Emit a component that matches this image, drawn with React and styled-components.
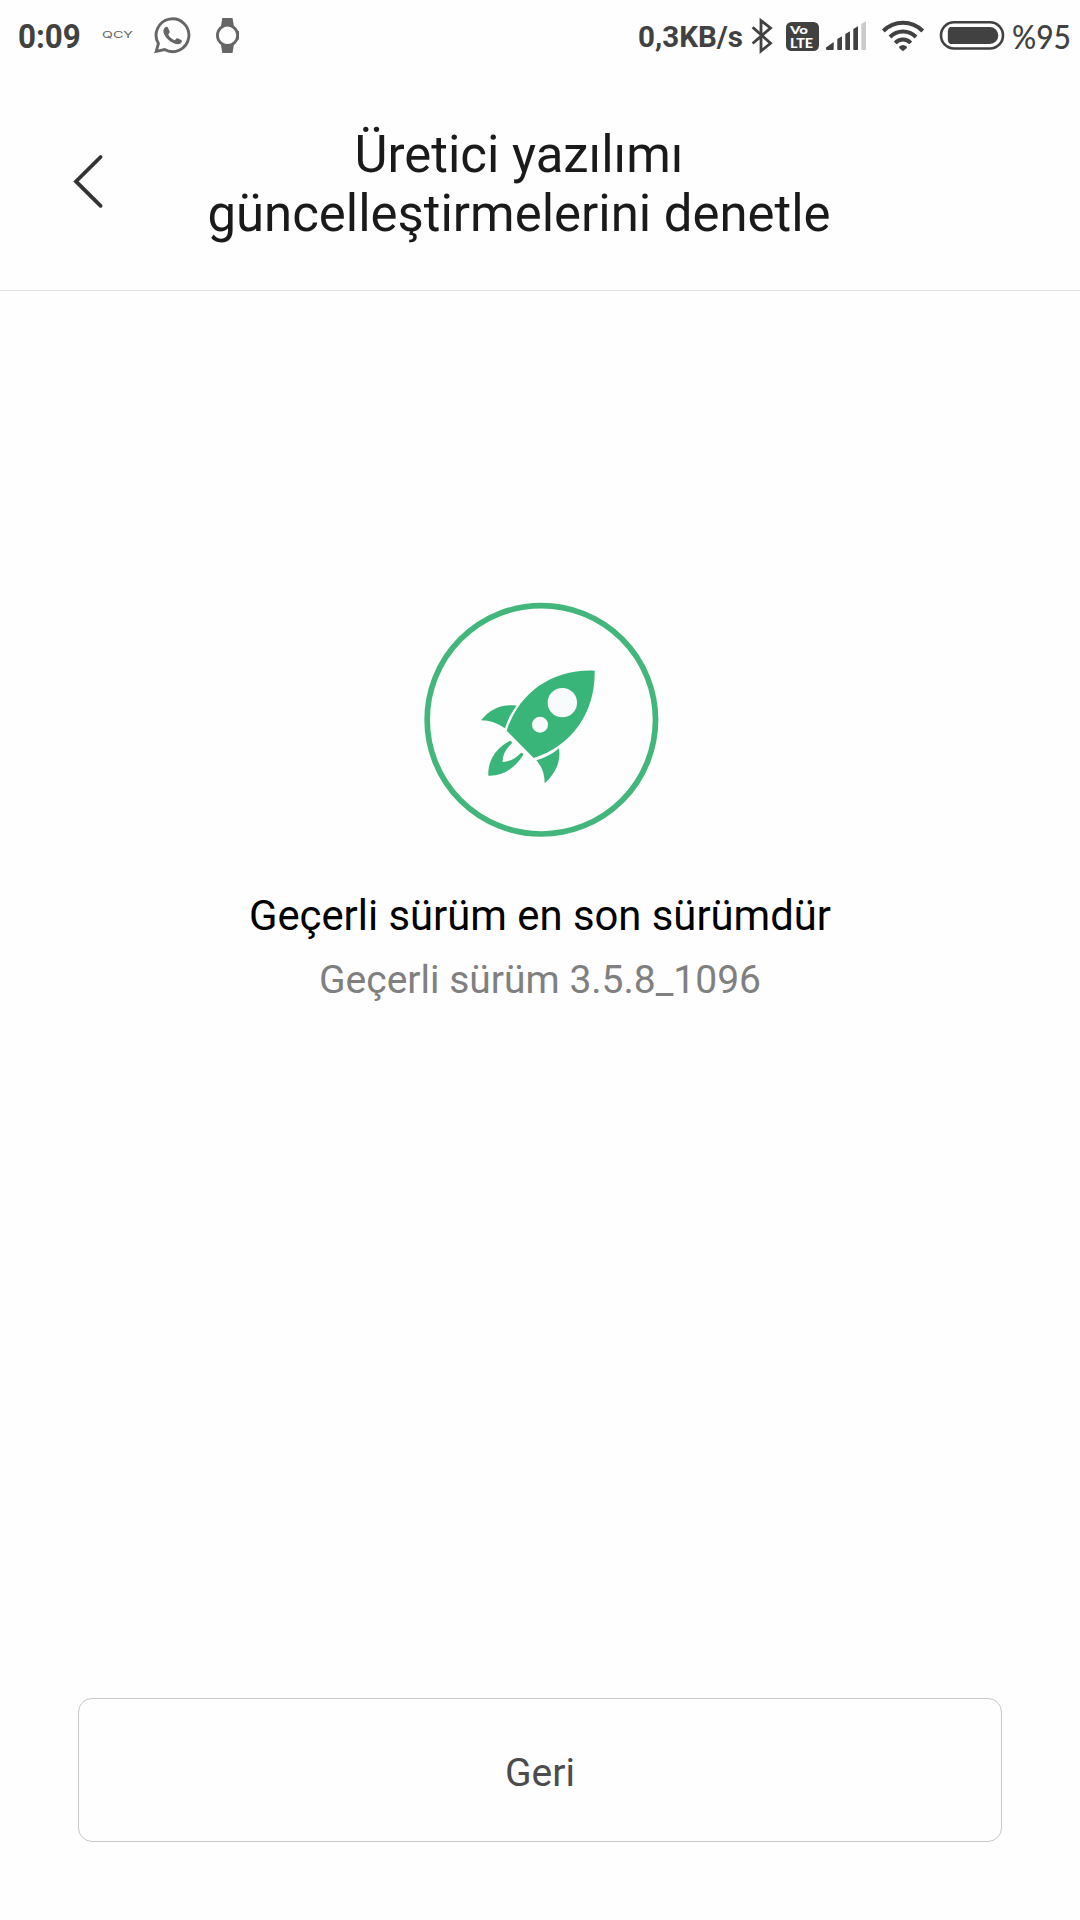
import React from "react";
import styled, { createGlobalStyle } from "styled-components";

const GlobalStyle = createGlobalStyle`
  body {
    margin: 0;
    background-color: #fefefe;
    font-family: Roboto, "Noto Sans", sans-serif;
  }
`;

const Screen = styled.div`
  display: flex;
  flex-direction: column;
  width: 1080px;
  height: 1920px;
  overflow: hidden;
  background-color: #fefefe;
`;

const StatusBar = styled.div`
  display: flex;
  justify-content: space-between;
  height: 72px;
  color: #414141;
`;

const StatusGroup = styled.div`
  display: flex;
  align-items: flex-start;
  height: 72px;
  padding-left: ${(props) => props.$inset || 0}px;
`;

const StatusText = styled.span`
  width: ${(props) => props.$width}px;
  font-family: ${(props) => props.$family || "Roboto, sans-serif"};
  font-size: ${(props) => props.$size}px;
  font-weight: ${(props) => props.$weight || 700};
  line-height: ${(props) => props.$line || 73}px;
  white-space: nowrap;
  transform: scaleX(${(props) => props.$stretch || 1});
  transform-origin: left center;
`;

const StatusIcon = styled.svg`
  display: block;
  width: ${(props) => props.$width}px;
  height: 72px;
  flex-shrink: 0;
`;

const VolteBadge = styled.div`
  display: flex;
  flex-direction: column;
  align-items: flex-start;
  box-sizing: border-box;
  width: 33px;
  height: 29px;
  margin: 22px 1px 0 0;
  padding: 2px 0 0 4px;
  border-radius: 5.5px;
  background-color: #414141;
  color: #fefefe;
  font-family: Lato, sans-serif;
  font-weight: 900;
`;

const VolteLine = styled.span`
  font-size: ${(props) => props.$size}px;
  line-height: ${(props) => props.$line}px;
  transform: scaleX(${(props) => props.$stretch});
  transform-origin: left center;
`;

const Header = styled.header`
  display: flex;
  height: 218px;
  border-bottom: 1px solid #e2e2e2;
`;

const BackButton = styled.button`
  width: 132px;
  height: 218px;
  padding: 0;
  border: 0;
  background: none;

  svg {
    display: block;
  }
`;

const Title = styled.h1`
  width: 774px;
  margin: 0;
  padding-top: 53px;
  color: #1a1a1a;
  font-size: 50.9px;
  font-weight: 400;
  line-height: 59px;
  text-align: center;
`;

const Main = styled.main`
  display: flex;
  flex: 1;
  flex-direction: column;
  align-items: center;
  padding-top: 299px;
`;

const Message = styled.p`
  margin: 41px 0 0;
  color: #000000;
  font-size: 41.8px;
  line-height: 50px;
`;

const Version = styled.p`
  margin: 14px 0 0;
  color: #808080;
  font-size: 39px;
  line-height: 50px;
`;

const Footer = styled.footer`
  padding: 0 78px 78px;
`;

const FooterButton = styled.button`
  display: block;
  width: 100%;
  height: 144px;
  padding: 6px 0 0;
  border: 1px solid #c8c8c8;
  border-radius: 14px;
  background: none;
  color: #4c4c4c;
  font-family: inherit;
  font-size: 39px;
`;

const QcyLogo = () => (
  <StatusIcon $width={73} viewBox="81 0 73 72">
    <text
      x="102"
      y="38.3"
      fill="#666"
      fontFamily="Inter, sans-serif"
      fontSize="8.5"
      textLength="31"
      lengthAdjust="spacingAndGlyphs"
    >
      QCY
    </text>
  </StatusIcon>
);

const WhatsappIcon = () => (
  <StatusIcon $width={38} viewBox="154 0 38 72" fill="#666">
    <path
      d="M156.2 51.4L158.4 43.6A16.4 16.4 0 1 1 164.6 49.6Z"
      fill="none"
      stroke="#666"
      strokeWidth="2.9"
    />
    <path d="M165.3 27.2C166.4 26.6 167.6 26.8 168.1 27.9L169.7 31.6C170 32.6 168.9 33.6 168.2 34.5C169.8 37.3 171.9 39.1 174.7 40.3C175.7 39.3 176.4 37.8 177.5 38.2L181.3 40.1C182.4 40.7 181.9 42.1 181.1 42.9C179.3 44.5 177 44.6 174.3 43.5C169.3 41.5 165.9 38 164 33.9C162.9 31.3 163.3 28.7 165.3 27.2Z" />
  </StatusIcon>
);

const WatchIcon = () => (
  <StatusIcon $width={50} viewBox="192 0 50 72" fill="#666">
    <path d="M222.3 18H232.5L234 26.5H220.9Z" />
    <path d="M220.9 44H234L232.5 53H222.3Z" />
    <circle cx="227.5" cy="35.3" r="10.1" fill="#fefefe" stroke="#666" strokeWidth="2.8" />
    <path d="M237.5 31H239V39.6H237.5Z" />
  </StatusIcon>
);

const BluetoothIcon = () => (
  <StatusIcon $width={42} viewBox="744 0 42 72">
    <path
      d="M752.6 27.3L770.5 43.3L761 51V20.6L770.5 28L752.6 43.5"
      fill="none"
      stroke="#414141"
      strokeWidth="2.8"
    />
  </StatusIcon>
);

const SignalIcon = () => (
  <StatusIcon $width={52} viewBox="820 0 52 72" fill="#414141">
    <path d="M826 47.5L833.7 42V49.2Q833.7 50 832.9 50H827Q826 50 826 49Z" />
    <path d="M837.3 39L842 36.3V49.2Q842 50 841.2 50H838.1Q837.3 50 837.3 49.2Z" />
    <path d="M845.3 34L850 31.3V49.2Q850 50 849.2 50H846.1Q845.3 50 845.3 49.2Z" />
    <path d="M853.3 29L858 26.3V49.2Q858 50 857.2 50H854.1Q853.3 50 853.3 49.2Z" />
    <path
      d="M861.3 24L866 21.2V49.2Q866 50 865.2 50H862.1Q861.3 50 861.3 49.2Z"
      fill="#cbcbcb"
    />
  </StatusIcon>
);

const WifiIcon = () => (
  <StatusIcon $width={62} viewBox="872 0 62 72">
    <g fill="none" stroke="#414141" strokeWidth="4">
      <path d="M883.3 31A27.8 27.8 0 0 1 922.7 31" />
      <path d="M890 37A18.3 18.3 0 0 1 916 37" />
      <path d="M895.3 43A10.3 10.3 0 0 1 910.7 43" />
    </g>
    <path d="M899.2 46.6Q903 43.2 906.8 46.6V48L903 51.2L899.2 48Z" fill="#414141" />
  </StatusIcon>
);

const BatteryIcon = () => (
  <StatusIcon $width={78} viewBox="934 0 78 72">
    <rect
      x="941"
      y="22.3"
      width="62"
      height="26.2"
      rx="13.1"
      fill="none"
      stroke="#414141"
      strokeWidth="2.6"
    />
    <path
      d="M950 27H989.8A8.5 8.5 0 0 1 989.8 44H950Q947.8 42.6 947.8 40V31Q947.8 28.4 950 27Z"
      fill="#414141"
    />
  </StatusIcon>
);

const Rocket = () => (
  <svg width="260" height="260" viewBox="0 0 780 780" fill="#3ab57a">
    <circle cx="394" cy="389.5" r="342.5" fill="none" stroke="#43b67c" strokeWidth="17" />
    <path d="M554 242C556 370 484 467 371 504L290 422C326 310 424 237 554 242Z" />
    <path d="M213 391C241 356 277 341 320 347C304 367 293 389 285 415C262 399 240 391 213 391Z" />
    <path d="M379 511C404 504 427 492 447 475C453 514 437 550 404 580C404 554 397 531 379 511Z" />
    <path d="M300 452Q306 453 306 460C286 477 277 496 278 516C299 515 317 505 333 488Q339 488 340 494C314 535 279 559 235 557C233 513 257 474 300 452Z" />
    <circle cx="457" cy="338" r="44" fill="#f9fafc" />
    <circle cx="390" cy="404" r="24" fill="#f9fafc" />
  </svg>
);

const App = () => {
  return (
    <Screen>
      <GlobalStyle />
      <StatusBar>
        <StatusGroup $inset={18}>
          <StatusText $width={63} $size={32.5} $line={75} $stretch={0.965}>
            0:09
          </StatusText>
          <QcyLogo />
          <WhatsappIcon />
          <WatchIcon />
        </StatusGroup>
        <StatusGroup>
          <StatusText $width={106} $size={30} $stretch={0.985}>
            0,3KB/s
          </StatusText>
          <BluetoothIcon />
          <VolteBadge>
            <VolteLine $size={12} $line={12} $stretch={1.25}>
              Vo
            </VolteLine>
            <VolteLine $size={13.5} $line={14} $stretch={1.06}>
              LTE
            </VolteLine>
          </VolteBadge>
          <SignalIcon />
          <WifiIcon />
          <BatteryIcon />
          <StatusText
            $width={68}
            $size={33}
            $weight={500}
            $line={72}
            $stretch={0.91}
            $family="Lato, sans-serif"
          >
            %95
          </StatusText>
        </StatusGroup>
      </StatusBar>
      <Header>
        <BackButton aria-label="Geri">
          <svg width="132" height="218" viewBox="0 72 132 218">
            <path
              d="M100.6 157L76 181.4L100.6 205.8"
              fill="none"
              stroke="#333"
              strokeWidth="3.8"
              strokeLinecap="round"
            />
          </svg>
        </BackButton>
        <Title>
          Üretici yazılımı
          <br />
          güncelleştirmelerini denetle
        </Title>
      </Header>
      <Main>
        <Rocket />
        <Message>Geçerli sürüm en son sürümdür</Message>
        <Version>Geçerli sürüm 3.5.8_1096</Version>
      </Main>
      <Footer>
        <FooterButton>Geri</FooterButton>
      </Footer>
    </Screen>
  );
};

export default App;
